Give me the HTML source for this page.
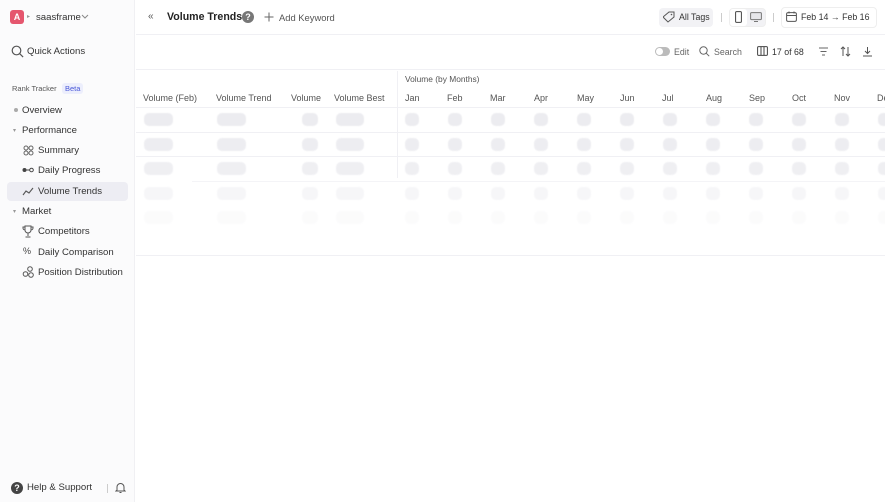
<!DOCTYPE html>
<html><head><meta charset="utf-8"><style>
*{box-sizing:border-box;margin:0;padding:0}
body{width:885px;height:502px;overflow:hidden;font-family:"Liberation Sans",sans-serif;color:#222;background:#fff;position:relative;font-size:10px}
.a{position:absolute;white-space:nowrap}
#side{position:absolute;left:0;top:0;width:135px;height:502px;background:#fbfbfc;border-right:1px solid #f0f0f3}
.nav{font-size:9.6px;color:#333}
.sk{position:absolute;height:13px;background:#ececf0;border-radius:5px;filter:blur(0.6px)}
.th{font-size:9px;color:#555;top:93px}
.hl{position:absolute;height:1px;background:#f0f0f4}
svg{position:absolute}
</style></head><body>
<div id="side">
<div class="a" style="left:10px;top:10px;width:14px;height:14px;background:#e5566e;border-radius:3px;color:#fff;font-size:9px;font-weight:bold;text-align:center;line-height:14px">A</div>
<div class="a" style="left:27px;top:13px;font-size:6px;color:#999">▸</div>
<div class="a" style="left:36px;top:12px;font-size:9.6px;color:#333">saasframe</div>
<svg style="left:81px;top:14px" width="8" height="6"><path d="M1 1l3 3 3-3" stroke="#888" fill="none"/></svg>
<svg style="left:11px;top:45px" width="13" height="13"><circle cx="5.5" cy="5.5" r="4.3" stroke="#555" stroke-width="1.2" fill="none"/><path d="M8.6 8.6l3.5 3.5" stroke="#555" stroke-width="1.2"/></svg>
<div class="a nav" style="left:27px;top:46px">Quick Actions</div>
<div class="a" style="left:12px;top:84px;font-size:7.5px;color:#555">Rank Tracker</div>
<div class="a" style="left:62px;top:83px;font-size:7.5px;color:#4a58d8;background:#eceefc;padding:1px 3px;border-radius:3px">Beta</div>
<div class="a" style="left:14px;top:108px;width:4px;height:4px;border-radius:2px;background:#aaa"></div>
<div class="a nav" style="left:22px;top:105px">Overview</div>
<div class="a" style="left:13px;top:127px;font-size:6px;color:#999">▾</div>
<div class="a nav" style="left:22px;top:125px">Performance</div>
<svg style="left:23px;top:145px" width="11" height="11"><circle cx="3" cy="3" r="2" stroke="#666" fill="none"/><circle cx="8" cy="3" r="2" stroke="#666" fill="none"/><circle cx="3" cy="8" r="2" stroke="#666" fill="none"/><circle cx="8" cy="8" r="2" stroke="#666" fill="none"/></svg>
<div class="a nav" style="left:38px;top:145px">Summary</div>
<svg style="left:22px;top:167px" width="12" height="6"><circle cx="2.5" cy="3" r="2" fill="#444"/><path d="M4.5 3h3" stroke="#444"/><circle cx="9.5" cy="3" r="1.8" stroke="#444" fill="none"/></svg>
<div class="a nav" style="left:38px;top:165px">Daily Progress</div>
<div class="a" style="left:7px;top:182px;width:121px;height:19px;background:#ededf3;border-radius:4px"></div>
<svg style="left:22px;top:186px" width="12" height="10"><path d="M1 9l3-4 3 2 4-5" stroke="#555" fill="none" stroke-width="1.1"/></svg>
<div class="a nav" style="left:38px;top:186px">Volume Trends</div>
<div class="a" style="left:13px;top:208px;font-size:6px;color:#999">▾</div>
<div class="a nav" style="left:22px;top:206px">Market</div>
<svg style="left:22px;top:225px" width="12" height="13"><path d="M3 1h6v4a3 3 0 0 1-6 0zM6 8v3M3.5 12h5M3 2H1v1a2 2 0 0 0 2 2M9 2h2v1a2 2 0 0 1-2 2" stroke="#555" fill="none"/></svg>
<div class="a nav" style="left:38px;top:226px">Competitors</div>
<div class="a" style="left:23px;top:246px;font-size:9px;color:#444">%</div>
<div class="a nav" style="left:38px;top:247px">Daily Comparison</div>
<svg style="left:22px;top:266px" width="13" height="12"><circle cx="8" cy="3" r="2.3" stroke="#555" fill="none"/><circle cx="3.5" cy="8" r="2.3" stroke="#555" fill="none"/><circle cx="9" cy="9" r="2.3" stroke="#555" fill="none"/></svg>
<div class="a nav" style="left:38px;top:267px">Position Distribution</div>
<div class="a" style="left:11px;top:482px;width:12px;height:12px;border-radius:6px;background:#444;color:#fff;font-size:9px;text-align:center;line-height:12px;font-weight:bold">?</div>
<div class="a nav" style="left:27px;top:482px">Help &amp; Support</div>
<div class="a" style="left:107px;top:484px;width:1px;height:9px;background:#ccc"></div>
<svg style="left:115px;top:481px" width="11" height="13"><path d="M2 9V6a3.5 3.5 0 0 1 7 0v3l1 1H1zM4.5 11.5h2" stroke="#555" fill="none"/></svg>
</div>
<!-- top bar -->
<div class="a" style="left:148px;top:11px;font-size:10px;color:#555">«</div>
<div class="a" style="left:167px;top:11px;font-size:10.6px;font-weight:bold;color:#222">Volume Trends</div>
<div class="a" style="left:242px;top:11px;width:12px;height:12px;border-radius:6px;background:#777;color:#fff;font-size:9px;text-align:center;line-height:12px;font-weight:bold">?</div>
<svg style="left:264px;top:12px" width="10" height="10"><path d="M5 0.5v9M0.5 5h9" stroke="#666"/></svg>
<div class="a" style="left:279px;top:12px;font-size:9.4px;color:#555">Add Keyword</div>
<div class="a" style="left:659px;top:8px;width:54px;height:19px;background:#f2f2f5;border-radius:4px"></div>
<svg style="left:663px;top:11px" width="12" height="12"><path d="M6 1h5v5l-6 5-5-5z" stroke="#555" fill="none"/><circle cx="8.5" cy="3.5" r=".8" fill="#555"/></svg>
<div class="a" style="left:679px;top:12px;font-size:8.8px;color:#333">All Tags</div>
<div class="a" style="left:721px;top:13px;width:1px;height:9px;background:#ccc"></div>
<div class="a" style="left:729px;top:8px;width:37px;height:19px;background:#f2f2f5;border-radius:4px;border:1px solid #eee"></div>
<div class="a" style="left:730px;top:9px;width:17px;height:17px;background:#fff;border-radius:3px"></div>
<svg style="left:735px;top:11px" width="7" height="12"><rect x=".6" y=".6" width="5.8" height="10.8" rx="1" stroke="#444" fill="none"/></svg>
<svg style="left:750px;top:12px" width="12" height="10"><rect x=".6" y=".6" width="10.8" height="7" rx="1" stroke="#777" fill="#e6e6ea"/><path d="M4 9.5h4" stroke="#777"/></svg>
<div class="a" style="left:773px;top:13px;width:1px;height:9px;background:#ccc"></div>
<div class="a" style="left:781px;top:7px;width:96px;height:21px;border:1px solid #eee;border-radius:4px"></div>
<svg style="left:786px;top:11px" width="11" height="11"><rect x=".6" y="1.6" width="9.8" height="8.8" rx="1.5" stroke="#555" fill="none"/><path d="M.6 4.5h9.8M3 .5v2M8 .5v2" stroke="#555"/></svg>
<div class="a" style="left:801px;top:12px;font-size:8.8px;color:#333">Feb 14 → Feb 16</div>
<div class="hl" style="left:136px;top:34px;width:749px"></div>
<!-- toolbar -->
<div class="a" style="left:655px;top:47px;width:15px;height:9px;border-radius:5px;background:#bbb"></div>
<div class="a" style="left:656px;top:48px;width:7px;height:7px;border-radius:4px;background:#fff"></div>
<div class="a" style="left:674px;top:47px;font-size:8.8px;color:#666">Edit</div>
<svg style="left:699px;top:46px" width="11" height="11"><circle cx="4.5" cy="4.5" r="3.7" stroke="#666" fill="none"/><path d="M7.2 7.2l3 3" stroke="#666"/></svg>
<div class="a" style="left:714px;top:47px;font-size:8.8px;color:#666">Search</div>
<svg style="left:757px;top:46px" width="11" height="10"><rect x=".6" y=".6" width="9.8" height="8.8" rx="1" stroke="#444" fill="none"/><path d="M4 .6v8.8M7 .6v8.8" stroke="#444"/></svg>
<div class="a" style="left:772px;top:47px;font-size:8.8px;color:#333">17 of 68</div>
<svg style="left:818px;top:47px" width="11" height="9"><path d="M1 1h9M2.5 4.5h6M4 8h3" stroke="#666"/></svg>
<svg style="left:840px;top:46px" width="11" height="11"><path d="M3 10V1M1 3l2-2 2 2M8 1v9M6 8l2 2 2-2" stroke="#555" fill="none"/></svg>
<svg style="left:862px;top:46px" width="11" height="11"><path d="M5.5 1v6M3 5l2.5 2.5L8 5M1 10h9" stroke="#555" fill="none"/></svg>
<div class="hl" style="left:136px;top:69px;width:749px"></div>
<!-- table header -->
<div class="a" style="left:405px;top:74px;font-size:8.4px;color:#555">Volume (by Months)</div>
<div class="a" style="left:397px;top:71px;width:1px;height:107px;background:#f0f0f4"></div>
<div class="a th" style="left:143px">Volume (Feb)</div>
<div class="a th" style="left:216px">Volume Trend</div>
<div class="a th" style="left:291px">Volume</div>
<div class="a th" style="left:334px">Volume Best</div>
<div class="a th" style="left:405px">Jan</div>
<div class="a th" style="left:447px">Feb</div>
<div class="a th" style="left:490px">Mar</div>
<div class="a th" style="left:534px">Apr</div>
<div class="a th" style="left:577px">May</div>
<div class="a th" style="left:620px">Jun</div>
<div class="a th" style="left:662px">Jul</div>
<div class="a th" style="left:706px">Aug</div>
<div class="a th" style="left:749px">Sep</div>
<div class="a th" style="left:792px">Oct</div>
<div class="a th" style="left:834px">Nov</div>
<div class="a th" style="left:877px">De</div>
<div class="hl" style="left:136px;top:107px;width:749px"></div>
<div class="hl" style="left:136px;top:132px;width:749px"></div>
<div class="hl" style="left:136px;top:156px;width:749px"></div>
<div class="hl" style="left:192px;top:181px;width:693px;opacity:.7"></div>
<div class="hl" style="left:136px;top:255px;width:749px"></div>
<div id="sk"></div>
<script>
var rows=[113,138,162,187,211],op=[1,.9,.8,.45,.2];
var cols=[[144,29],[217,29],[302,16],[336,28]];
for(var m=0;m<12;m++)cols.push([405+m*43,14]);
var h='';
rows.forEach(function(y,i){cols.forEach(function(c){h+='<div class="sk" style="left:'+c[0]+'px;top:'+y+'px;width:'+c[1]+'px;opacity:'+op[i]+'"></div>';});});
document.getElementById('sk').innerHTML=h;
</script>
</body></html>
